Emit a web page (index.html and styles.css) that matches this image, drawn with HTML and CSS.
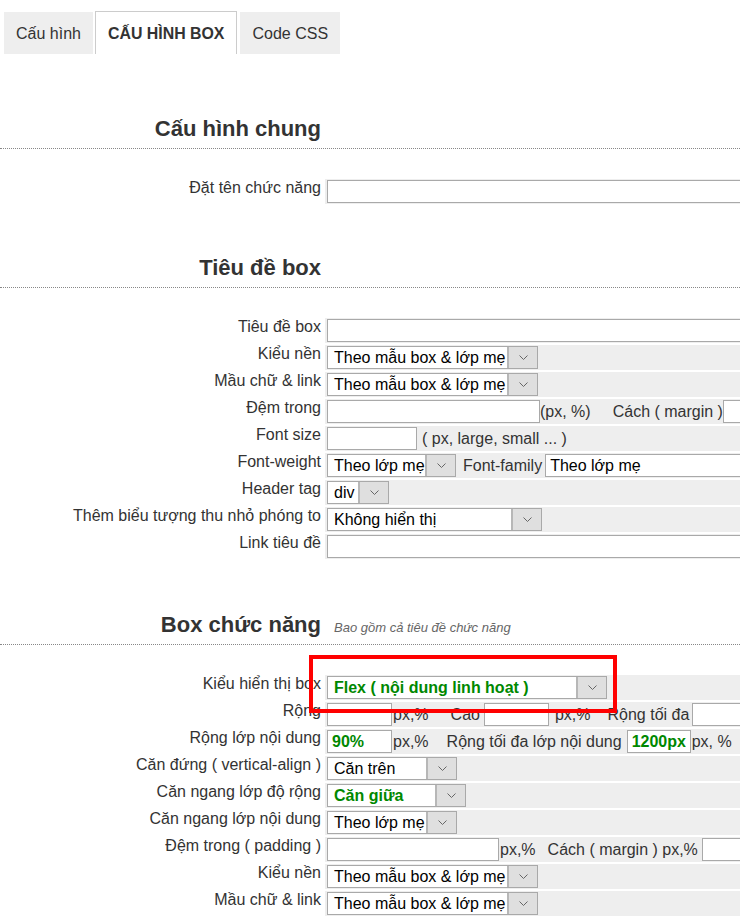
FILE: index.html
```html
<!DOCTYPE html>
<html lang="vi">

<head>
    <meta charset="UTF-8">
    <meta name="viewport" content="width=device-width, initial-scale=1.0">
    <title>Cấu hình box</title>
    <link rel="stylesheet" href="styles.css">
</head>

<body>
    <div class="tabs">
        <span class="tab">Cấu hình</span>
        <span class="tab current">CẤU HÌNH BOX</span>
        <span class="tab">Code CSS</span>
    </div>

    <div class="form">
        <!-- Cấu hình chung -->
        <div class="sec first">
            <h2>Cấu hình chung</h2>
            <span></span>
        </div>
        <div class="row">
            <label>Đặt tên chức năng</label>
            <div class="val"><input type="text" class="txt full"></div>
        </div>

        <!-- Tiêu đề box -->
        <div class="sec">
            <h2>Tiêu đề box</h2>
            <span></span>
        </div>
        <div class="row">
            <label>Tiêu đề box</label>
            <div class="val"><input type="text" class="txt full"></div>
        </div>
        <div class="row">
            <label>Kiểu nền</label>
            <div class="val">
                <span class="sel w211"><span class="sel-val">Theo mẫu box &amp; lớp mẹ</span><span class="sel-btn"><svg width="9" height="5" viewBox="0 0 9 5"><polyline points="0.5,0.5 4.5,4.5 8.5,0.5" /></svg></span></span>
            </div>
        </div>
        <div class="row">
            <label>Mầu chữ &amp; link</label>
            <div class="val">
                <span class="sel w211"><span class="sel-val">Theo mẫu box &amp; lớp mẹ</span><span class="sel-btn"><svg width="9" height="5" viewBox="0 0 9 5"><polyline points="0.5,0.5 4.5,4.5 8.5,0.5" /></svg></span></span>
            </div>
        </div>
        <div class="row">
            <label>Đệm trong</label>
            <div class="val">
                <input type="text" class="txt w213">
                <span class="note">(px, %)</span>
                <span class="note ml22">Cách ( margin )</span>
                <input type="text" class="txt full">
            </div>
        </div>
        <div class="row">
            <label>Font size</label>
            <div class="val">
                <input type="text" class="txt w90">
                <span class="note ml5">( px, large, small ... )</span>
            </div>
        </div>
        <div class="row">
            <label>Font-weight</label>
            <div class="val">
                <span class="sel w129"><span class="sel-val">Theo lớp mẹ</span><span class="sel-btn"><svg width="9" height="5" viewBox="0 0 9 5"><polyline points="0.5,0.5 4.5,4.5 8.5,0.5" /></svg></span></span>
                <span class="note ml7">Font-family</span>
                <input type="text" class="txt full ml3" value="Theo lớp mẹ">
            </div>
        </div>
        <div class="row">
            <label>Header tag</label>
            <div class="val">
                <span class="sel w62"><span class="sel-val">div</span><span class="sel-btn"><svg width="9" height="5" viewBox="0 0 9 5"><polyline points="0.5,0.5 4.5,4.5 8.5,0.5" /></svg></span></span>
            </div>
        </div>
        <div class="row">
            <label>Thêm biểu tượng thu nhỏ phóng to</label>
            <div class="val">
                <span class="sel w215"><span class="sel-val">Không hiển thị</span><span class="sel-btn"><svg width="9" height="5" viewBox="0 0 9 5"><polyline points="0.5,0.5 4.5,4.5 8.5,0.5" /></svg></span></span>
            </div>
        </div>
        <div class="row">
            <label>Link tiêu đề</label>
            <div class="val"><input type="text" class="txt full"></div>
        </div>

        <!-- Box chức năng -->
        <div class="sec third">
            <h2>Box chức năng</h2>
            <span class="sub">Bao gồm cả tiêu đề chức năng</span>
        </div>
        <div class="row">
            <label>Kiểu hiển thị box</label>
            <div class="val">
                <span class="sel w280 hl"><span class="sel-val">Flex ( nội dung linh hoạt )</span><span class="sel-btn"><svg width="9" height="5" viewBox="0 0 9 5"><polyline points="0.5,0.5 4.5,4.5 8.5,0.5" /></svg></span></span>
            </div>
            <i class="mark"></i>
        </div>
        <div class="row">
            <label>Rộng</label>
            <div class="val">
                <input type="text" class="txt w65">
                <span class="note ml1">px,%</span>
                <span class="note ml22">Cao</span>
                <input type="text" class="txt w65 ml4">
                <span class="note ml6">px,%</span>
                <span class="note ml17">Rộng tối đa</span>
                <input type="text" class="txt full ml3">
            </div>
        </div>
        <div class="row">
            <label>Rộng lớp nội dung</label>
            <div class="val">
                <input type="text" class="txt w65 hl" value="90%">
                <span class="note ml1">px,%</span>
                <span class="note ml18">Rộng tối đa lớp nội dung</span>
                <input type="text" class="txt w64 ml5 hl" value="1200px">
                <span class="note ml1">px, %</span>
            </div>
        </div>
        <div class="row">
            <label>Căn đứng ( vertical-align )</label>
            <div class="val">
                <span class="sel w130"><span class="sel-val">Căn trên</span><span class="sel-btn"><svg width="9" height="5" viewBox="0 0 9 5"><polyline points="0.5,0.5 4.5,4.5 8.5,0.5" /></svg></span></span>
            </div>
        </div>
        <div class="row">
            <label>Căn ngang lớp độ rộng</label>
            <div class="val">
                <span class="sel w139 hl"><span class="sel-val">Căn giữa</span><span class="sel-btn"><svg width="9" height="5" viewBox="0 0 9 5"><polyline points="0.5,0.5 4.5,4.5 8.5,0.5" /></svg></span></span>
            </div>
        </div>
        <div class="row">
            <label>Căn ngang lớp nội dung</label>
            <div class="val">
                <span class="sel w130"><span class="sel-val">Theo lớp mẹ</span><span class="sel-btn"><svg width="9" height="5" viewBox="0 0 9 5"><polyline points="0.5,0.5 4.5,4.5 8.5,0.5" /></svg></span></span>
            </div>
        </div>
        <div class="row">
            <label>Đệm trong ( padding )</label>
            <div class="val">
                <input type="text" class="txt w172">
                <span class="note ml1">px,%</span>
                <span class="note ml12">Cách ( margin ) px,%</span>
                <input type="text" class="txt full ml4">
            </div>
        </div>
        <div class="row">
            <label>Kiểu nền</label>
            <div class="val">
                <span class="sel w211"><span class="sel-val">Theo mẫu box &amp; lớp mẹ</span><span class="sel-btn"><svg width="9" height="5" viewBox="0 0 9 5"><polyline points="0.5,0.5 4.5,4.5 8.5,0.5" /></svg></span></span>
            </div>
        </div>
        <div class="row">
            <label>Mầu chữ &amp; link</label>
            <div class="val">
                <span class="sel w211"><span class="sel-val">Theo mẫu box &amp; lớp mẹ</span><span class="sel-btn"><svg width="9" height="5" viewBox="0 0 9 5"><polyline points="0.5,0.5 4.5,4.5 8.5,0.5" /></svg></span></span>
            </div>
        </div>
    </div>
</body>

</html>
```

FILE: styles.css
```css
* {
    margin: 0;
    padding: 0;
    box-sizing: border-box;
}

html,
body {
    overflow: hidden;
}

body {
    background: #fff;
    color: #333;
    font-family: "Liberation Sans", Arial, "Noto Sans", sans-serif;
    font-size: 16px;
}

/* tabs */
.tabs {
    display: flex;
    align-items: flex-end;
    padding: 11px 0 0 4px;
}

.tab {
    display: block;
    height: 42px;
    line-height: 44px;
    padding: 0 12px;
    margin-right: 2px;
    background: #eee;
    color: #333;
    font-size: 16px;
}

.tab.current {
    height: 43px;
    line-height: 44px;
    background: #fff;
    border: 1px solid #ccc;
    border-bottom: none;
    font-size: 15.9px;
    font-weight: bold;
    margin-right: 3px;
}

/* form */
.form {
    width: 1100px;
}

.sec {
    display: grid;
    grid-template-columns: 321px 1fr;
    column-gap: 13px;
    align-items: baseline;
    margin: 52px 0 30px;
    padding-bottom: 7px;
    border-bottom: 1px dotted #888;
}

.sec.first {
    margin-top: 63px;
}

.sec.third {
    margin-top: 54px;
}

.sec h2 {
    text-align: right;
    font-size: 22px;
    line-height: 24px;
    color: #333;
}

.sec .sub {
    font-size: 13px;
    font-style: italic;
    color: #666;
}

.row {
    display: grid;
    grid-template-columns: 321px 1fr;
    column-gap: 4px;
    margin-bottom: 2px;
    position: relative;
}

.row label {
    text-align: right;
    line-height: 18px;
    white-space: nowrap;
}

.val {
    display: flex;
    align-items: center;
    height: 25px;
    padding: 1px 2px;
    background: #eee;
    white-space: nowrap;
}

.note {
    color: #333;
}

.txt {
    height: 23px;
    border: 1px solid #a9a9a9;
    background: #fff;
    padding: 0 4px;
    font-family: inherit;
    font-size: 16px;
    color: #000;
    outline: none;
}

.sel {
    display: inline-flex;
    height: 23px;
    border: 1px solid #a9a9a9;
    background: #fff;
    color: #000;
}

.sel-val {
    flex: 1;
    padding-left: 6px;
    line-height: 21px;
    overflow: hidden;
}

.sel-btn {
    display: flex;
    align-items: center;
    justify-content: center;
    width: 30px;
    background: #dfdfdf;
    border-left: 2px solid #b7b7b7;
}

.sel-btn svg polyline {
    fill: none;
    stroke: #666;
    stroke-width: 1;
}

.hl,
.hl .sel-val {
    color: #080;
    font-weight: bold;
}

/* red mark over the display type row */
.mark {
    position: absolute;
    z-index: 2;
    left: 309px;
    top: -20px;
    width: 308px;
    height: 58px;
    border: 4px solid #f00;
}

.full { width: 500px; }
.w62 { width: 62px; }
.w64 { width: 64px; }
.w65 { width: 65px; }
.w90 { width: 90px; }
.w129 { width: 129px; }
.w130 { width: 130px; }
.w139 { width: 139px; }
.w172 { width: 172px; }
.w211 { width: 211px; }
.w213 { width: 213px; }
.w215 { width: 215px; }
.w280 { width: 280px; }

.ml1 { margin-left: 1px; }
.ml3 { margin-left: 3px; }
.ml4 { margin-left: 4px; }
.ml5 { margin-left: 5px; }
.ml6 { margin-left: 6px; }
.ml7 { margin-left: 7px; }
.ml12 { margin-left: 12px; }
.ml17 { margin-left: 17px; }
.ml18 { margin-left: 18px; }
.ml22 { margin-left: 22px; }
```
